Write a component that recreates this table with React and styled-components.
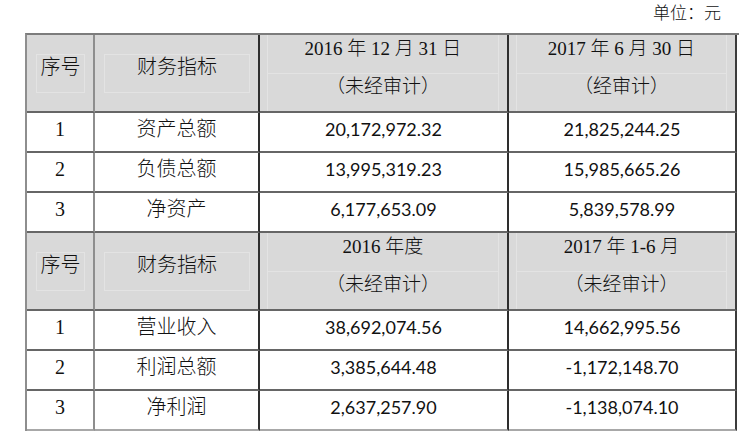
import React from 'react';
import styled, { createGlobalStyle } from 'styled-components';

const GlobalStyle = createGlobalStyle`
  html, body {
    margin: 0;
    padding: 0;
    background: #ffffff;
  }
  body {
    font-family: "Liberation Serif", "Noto Sans CJK SC", serif;
    color: #111111;
  }
`;

const Page = styled.div`
  width: 745px;
  height: 433px;
  overflow: hidden;
`;

const Unit = styled.div`
  height: 33px;
  line-height: 24px;
  text-align: right;
  padding-right: 24px;
  font-family: "Noto Sans CJK SC", sans-serif;
  font-size: 17px;
  font-weight: 300;
`;

const Table = styled.div`
  display: grid;
  grid-template-columns: 68px 165px 249px 228px;
  margin-left: 25px;
  width: 712px;
  border-top: 2px solid #7c7c7c;
  border-left: 2px solid #8e8e8e;
`;

const rightBorders = ['2px solid #8e8e8e', '2px solid #2e2e2e', '2px solid #2e2e2e', '2px solid #3c3c3c'];

const Cell = styled.div`
  box-sizing: border-box;
  height: ${(p) => (p.$head ? 78 : 40)}px;
  border-right: ${(p) => rightBorders[p.$col]};
  border-bottom: 2px solid ${(p) => (p.$last ? '#a8a8a8' : '#666666')};
  background: ${(p) => (p.$head ? '#d9d9d9' : '#ffffff')};
  text-align: center;
  white-space: nowrap;
`;

const DataText = styled.div`
  padding-top: 5px;
  line-height: 22px;
  font-size: ${(p) => (p.$num ? 18 : 20)}px;
  font-family: ${(p) =>
    p.$num ? '"Lato", "Liberation Sans", sans-serif' : '"Liberation Serif", "Noto Sans CJK SC", serif'};
  font-weight: ${(p) => (p.$num ? 400 : 300)};
`;

const HeadInset = styled.div`
  box-sizing: border-box;
  margin: 19px 8px 0 9px;
  height: 39px;
  border: 1px solid #e3e3e3;
  line-height: 22px;
  font-size: 20px;
  font-family: "Noto Sans CJK SC", sans-serif;
  font-weight: 300;
`;

const HeadStack = styled.div`
  margin: 0 8px 0 7px;
  height: 76px;
  border-left: 1px solid #e3e3e3;
  border-right: 1px solid #e3e3e3;
`;

const SubRow = styled.div`
  box-sizing: border-box;
  height: ${(p) => (p.$first ? 39 : 37)}px;
  padding-top: ${(p) => (p.$first ? 3 : 2)}px;
  border-bottom: ${(p) => (p.$first ? '1px solid #e3e3e3' : 'none')};
  line-height: 22px;
  font-size: 19px;
  font-family: "Liberation Serif", "Noto Sans CJK SC", serif;
  font-weight: 300;
`;

const sections = [
  {
    periods: [
      ['2016 年 12 月 31 日', '（未经审计）'],
      ['2017 年 6 月 30 日', '（经审计）'],
    ],
    rows: [
      ['1', '资产总额', '20,172,972.32', '21,825,244.25'],
      ['2', '负债总额', '13,995,319.23', '15,985,665.26'],
      ['3', '净资产', '6,177,653.09', '5,839,578.99'],
    ],
  },
  {
    periods: [
      ['2016 年度', '（未经审计）'],
      ['2017 年 1-6 月', '（未经审计）'],
    ],
    rows: [
      ['1', '营业收入', '38,692,074.56', '14,662,995.56'],
      ['2', '利润总额', '3,385,644.48', '-1,172,148.70'],
      ['3', '净利润', '2,637,257.90', '-1,138,074.10'],
    ],
  },
];

export default function App() {
  return (
    <Page>
      <GlobalStyle />
      <Unit>单位：元</Unit>
      <Table>
        {sections.map((sec, si) => (
          <React.Fragment key={si}>
            <Cell $head $col={0}>
              <HeadInset>序号</HeadInset>
            </Cell>
            <Cell $head $col={1}>
              <HeadInset>财务指标</HeadInset>
            </Cell>
            {sec.periods.map((p, pi) => (
              <Cell $head $col={2 + pi} key={pi}>
                <HeadStack>
                  <SubRow $first>{p[0]}</SubRow>
                  <SubRow>{p[1]}</SubRow>
                </HeadStack>
              </Cell>
            ))}
            {sec.rows.map((r, ri) => {
              const last = si === sections.length - 1 && ri === sec.rows.length - 1;
              return r.map((v, ci) => (
                <Cell $col={ci} $last={last} key={`${ri}-${ci}`}>
                  <DataText $num={ci >= 2}>{v}</DataText>
                </Cell>
              ));
            })}
          </React.Fragment>
        ))}
      </Table>
    </Page>
  );
}
